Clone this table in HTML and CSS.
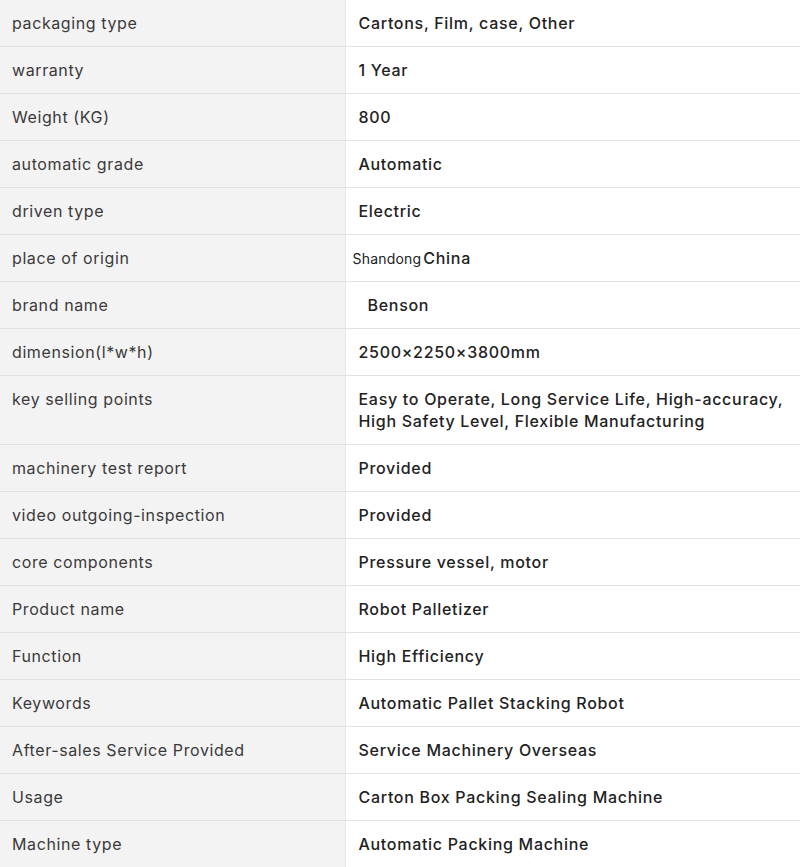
FILE: index.html
```html
<!DOCTYPE html>
<html lang="en">
<head>
<meta charset="utf-8">
<title>Product attributes</title>
<link rel="stylesheet" href="styles.css">
</head>
<body>
<table class="attrs">
  <tbody>
    <tr><td class="key">packaging type</td><td class="val">Cartons, Film, case, Other</td></tr>
    <tr><td class="key">warranty</td><td class="val">1 Year</td></tr>
    <tr><td class="key">Weight (KG)</td><td class="val">800</td></tr>
    <tr><td class="key">automatic grade</td><td class="val">Automatic</td></tr>
    <tr><td class="key">driven type</td><td class="val">Electric</td></tr>
    <tr><td class="key">place of origin</td><td class="val origin"><span class="small">Shandong</span>China</td></tr>
    <tr><td class="key">brand name</td><td class="val"><span class="indent">Benson</span></td></tr>
    <tr><td class="key">dimension(l*w*h)</td><td class="val">2500×2250×3800mm</td></tr>
    <tr><td class="key">key selling points</td><td class="val">Easy to Operate, Long Service Life, High-accuracy, High Safety Level, Flexible Manufacturing</td></tr>
    <tr><td class="key">machinery test report</td><td class="val">Provided</td></tr>
    <tr><td class="key">video outgoing-inspection</td><td class="val">Provided</td></tr>
    <tr><td class="key">core components</td><td class="val">Pressure vessel, motor</td></tr>
    <tr><td class="key">Product name</td><td class="val">Robot Palletizer</td></tr>
    <tr><td class="key">Function</td><td class="val">High Efficiency</td></tr>
    <tr><td class="key">Keywords</td><td class="val">Automatic Pallet Stacking Robot</td></tr>
    <tr><td class="key">After-sales Service Provided</td><td class="val">Service Machinery Overseas</td></tr>
    <tr><td class="key">Usage</td><td class="val">Carton Box Packing Sealing Machine</td></tr>
    <tr><td class="key">Machine type</td><td class="val">Automatic Packing Machine</td></tr>
  </tbody>
</table>
</body>
</html>
```
FILE: styles.css
```css
html, body {
  margin: 0;
  padding: 0;
  background: #ffffff;
}
body {
  font-family: Inter, "Liberation Sans", Arial, sans-serif;
  font-size: 16px;
  line-height: 22px;
  color: #333333;
}
.attrs {
  width: 800px;
  border-collapse: collapse;
  table-layout: fixed;
}
.attrs td {
  padding: 12px;
  vertical-align: top;
  border-bottom: 1px solid #e2e2e2;
}
.attrs tr:last-child td {
  border-bottom: none;
}
.attrs td.key {
  width: 345px;
  box-sizing: border-box;
  background: #f3f3f3;
  border-right: 1px solid #e6e6e6;
  color: #3a3a3a;
  letter-spacing: 0.6px;
}
.attrs td.val {
  color: #222222;
  font-weight: 500;
  letter-spacing: 0.7px;
  padding-left: 13px;
  padding-right: 6px;
}
.attrs td.origin {
  padding-left: 7px;
}
.small {
  font-size: 14px;
  line-height: 1;
  font-weight: 400;
  letter-spacing: 0.2px;
  margin-right: 2px;
}
.indent {
  padding-left: 9px;
}
```
